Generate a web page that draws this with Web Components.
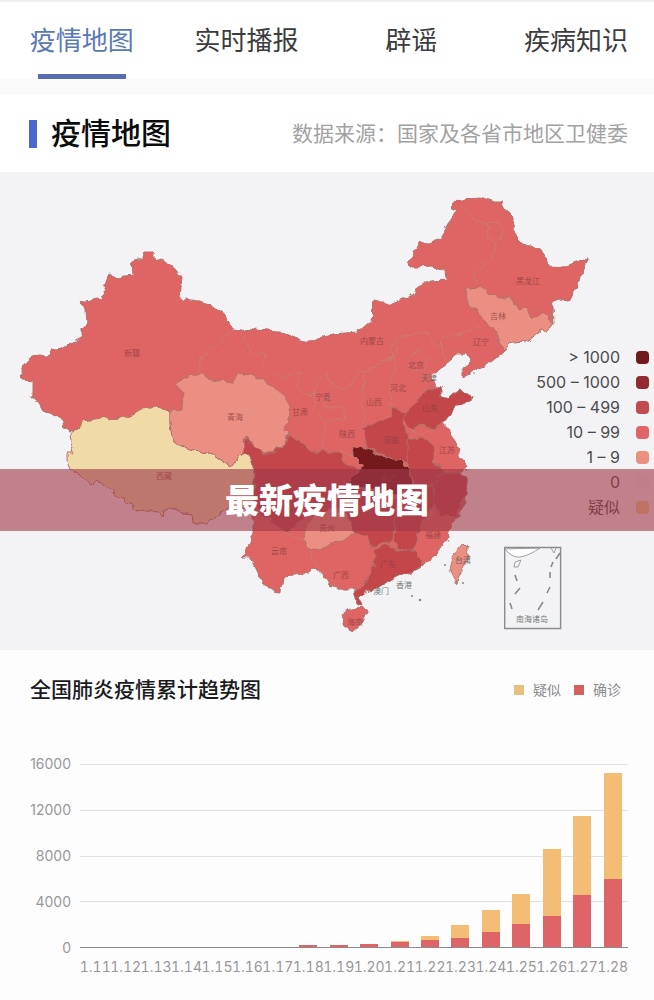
<!DOCTYPE html>
<html lang="zh-CN">
<head>
<meta charset="utf-8">
<meta name="viewport" content="width=device-width, initial-scale=1">
<title>最新疫情地图</title>
<style>
body { margin: 0; background: #fafafa; font-family: "Liberation Sans", "Noto Sans CJK SC", sans-serif; color: #333; }
</style>
</head>
<body>
<epidemic-page></epidemic-page>
<script>
const define = (name, html, setup) => customElements.define(name, class extends HTMLElement {
  connectedCallback() {
    if (this.shadowRoot) return;
    const root = this.attachShadow({ mode: 'open' });
    const t = document.createElement('template');
    t.innerHTML = html;
    root.append(t.content.cloneNode(true));
    if (setup) setup(root, this);
  }
});

define('tab-bar', `
<style>
:host { display: block; background: #fff; border-top: 2px solid #f0f0f0; }
nav { display: grid; grid-template-columns: repeat(4, 1fr); column-gap: 9px; padding-left: 4px; }
</style>
<nav><slot></slot></nav>`);

define('tab-item', `
<style>
:host { display: flex; justify-content: center; }
a { display: flex; flex-direction: column; align-items: center; color: #3c3c3e; text-decoration: none; font-size: 26px; line-height: 36px; padding-top: 21px; white-space: nowrap; }
a::after { content: ""; width: 88px; height: 5px; margin-top: 15px; }
:host([active]) a { color: #5a78b6; }
:host([active]) a::after { background: #566bb0; }
</style>
<a href="#"><slot></slot></a>`, (root, host) => {
  if (host.hasAttribute('active')) root.querySelector('a').setAttribute('aria-current', 'page');
});

define('map-heading', `
<style>
:host { display: flex; align-items: center; justify-content: space-between; margin-top: 16px; padding: 0 26px 0 29px; height: 77px; background: #fff; }
h1 { display: flex; align-items: center; gap: 14px; margin: 0; font-size: 30px; line-height: 40px; font-weight: 500; color: #0c0c0c; white-space: nowrap; }
h1::before { content: ""; width: 8px; height: 28px; background: #4c68cf; }
p { margin: 0; font-size: 21px; line-height: 30px; color: #a2a2a2; white-space: nowrap; }
</style>
<h1><slot></slot></h1><p><slot name="source"></slot></p>`);

define('map-legend', `
<style>
:host { display: block; font-family: Inter, "Noto Sans CJK SC", sans-serif; font-size: 16px; line-height: 25px; color: #4b4b4d; }
ul { list-style: none; margin: 0; padding: 0; }
li { display: flex; align-items: center; justify-content: flex-end; gap: 16px; white-space: nowrap; }
i { width: 13px; height: 13px; border-radius: 4px; }
</style>
<ul></ul>`, root => {
  const rows = [['> 1000', '#701a20'], ['500 – 1000', '#932a32'], ['100 – 499', '#c24a4f'], ['10 – 99', '#df6467'], ['1 – 9', '#ea917f'], ['0', '#f4ecea'], ['疑似', '#eecf8c']];
  root.querySelector('ul').innerHTML = rows.map(([t, c]) => `<li><span>${t}</span><i style="background:${c}"></i></li>`).join('');
});

define('china-map', `
<style>
:host { display: block; }
svg { display: block; width: 100%; height: auto; }
.land path { stroke: #b0736c; stroke-width: 1; stroke-linejoin: round; }
.m { fill: #df6464; } .d { fill: #c2464a; } .l { fill: #ea8f82; } .x { fill: #75191d; } .y { fill: #f0daa7; }
.land .line { fill: none; stroke: #c87d76; }
text { font: 8px "Noto Sans CJK SC", sans-serif; text-anchor: middle; fill: #8d3f42; fill-opacity: .8; }
.dark text { fill: #4e5653; }
.inset { fill: none; stroke: #8b8b8e; }
</style>
<svg viewBox="0 172 654 478" role="img" aria-label="全国疫情分布">
<defs><filter id="coast" x="0" y="172" width="654" height="478" filterUnits="userSpaceOnUse" color-interpolation-filters="sRGB">
<feTurbulence type="fractalNoise" baseFrequency=".15" numOctaves="1" seed="4" result="n"/>
<feDisplacementMap in="SourceGraphic" in2="n" scale="8" xChannelSelector="R" yChannelSelector="G"/><feGaussianBlur stdDeviation=".4"/></filter></defs>
<g class="land" filter="url(#coast)">
<path class="m" d="M22 372L25 363 33 357 40 356 48 357 52 351 62 349 72 343 83 337 83 328 87 323 86 310 81 302 97 298 104 299 102 293 109 274 117 278 133 276 132 262 142 259 144 251 153 251 155 257 167 264 173 266 182 278 180 297 183 299 200 301 213 307 222 312 232 328 240 329 280 332 300 340 310 342 333 334 357 332 365 325 374 317 371 310 373 301 383 303 392 303 413 295 418 287 430 281 448 280 443 270 430 266 420 267 410 267 409 262 419 242 427 244 443 238 443 232 452 217 457 211 450 207 455 202 467 198 480 197 495 202 502 202 508 213 513 218 517 240 522 245 537 247 545 254 550 267 563 268 577 262 588 259 583 268 580 280 572 295 569 301 560 299 553 303 552 308 553 323 550 327 547 332 542 330 533 337 525 342 512 343 504 351 490 363 477 368 462 377 462 372 470 362 466 353 458 353 452 358 440 368 432 375 433 383 440 388 442 397 448 397 458 390 473 397 470 402 458 405 443 423 447 428 455 440 460 457 468 467 460 473 468 480 467 493 462 508 452 523 447 540 435 555 423 565 413 572 397 577 380 587 363 593 358 598 362 605 356 603 354 593 358 590 345 590 330 585 325 575 313 568 303 575 283 577 280 593 275 592 263 583 257 573 250 558 243 558 247 548 253 533 253 508 230 507 180 440 78 430 70 431 65 428 63 418 45 412 35 397 30 398 33 393 33 381 23 380Z"/>
<path class="y" d="M72 432L78 430 83 421 107 417 113 420 133 415 142 409 157 407 170 410 170 423 172 438 182 447 213 454 225 463 232 466 242 453 250 457 254 470 254 500 252 508 230 507 220 513 208 523 193 523 192 515 170 508 165 510 164 518 160 512 138 510 120 497 107 488 97 480 92 485 80 475 70 470 67 460 67 453 73 453 69 437Z"/>
<path class="l" d="M170 410L182 411 183 393 175 382 200 374 213 380 233 383 238 373 255 376 278 390 292 407 289 417 283 427 288 433 285 445 272 453 263 453 250 443 247 435 242 453 232 466 225 463 213 454 182 447 172 438 170 423Z"/>
<path class="d" d="M247 435L250 443 263 453 272 453 285 445 288 435 300 440 312 452 322 452 340 452 343 461 357 468 358 482 350 490 346 505 330 509 310 516 298 522 290 532 280 530 268 518 260 514 254 500 254 470 250 457 242 453Z"/>
<path class="d" d="M363 428L390 417 392 408 407 413 402 423 408 437 413 447 408 463 400 463 367 448Z"/>
<path class="d" d="M410 408L420 397 430 387 440 388 442 397 448 397 458 390 473 397 470 402 458 405 443 423 435 428 420 425 413 430 402 420Z"/>
<path class="d" d="M408 440L423 437 435 447 433 463 442 467 443 473 433 485 417 487 408 470Z"/>
<path class="d" d="M443 473L460 473 468 480 467 493 455 517 440 515 433 500 433 485Z"/>
<path class="d" d="M350 488L390 495 397 500 393 540 382 542 373 548 368 537 353 533 347 514Z"/>
<path class="d" d="M397 497L412 487 433 485 434 505 422 522 417 543 412 552 397 548 394 540Z"/>
<path class="x" d="M353 447L367 448 380 457 400 460 410 470 412 487 392 496 370 488 346 490 350 480 363 465 353 455Z"/>
<path class="d" d="M375 550L387 543 397 550 412 551 420 557 423 565 413 572 397 577 380 587 363 593 358 598 362 605 356 603 354 593 363 587 373 565Z"/>
<path class="l" d="M305 530L312 517 330 509 347 514 354 533 343 541 332 544 320 550 308 548 304 540Z"/>
<path class="l" d="M466 290L483 286 488 294 505 298 513 300 518 310 527 308 532 318 540 314 548 316 553 323 550 327 547 332 542 330 533 337 525 342 512 343 504 351 495 330 480 318 477 308 470 308Z"/>
<path class="m" d="M347 610L363 607 367 612 363 622 353 631 345 627 343 618Z"/>
<path class="l" d="M463 543L467 547 467 560 458 578 457 585 454 578 449 568 452 557Z"/>
<path class="line" d="M240 329L252 355 265 353 263 365 282 378 300 372 297 387 308 395 315 393 315 410 325 422 323 440 323 450M200 374L200 358 220 342 232 329M315 393L320 377 327 372 333 387 347 390 357 372 365 371 393 358 392 342 397 338 420 333 430 333 433 345 443 347M330 392L323 407 345 407 345 418 325 422M365 372L362 400 363 428M393 358L398 365 390 380 392 408M380 360L397 357 397 342M408 357L418 350 427 357 425 368 412 372 408 363M425 365L433 375M483 325L450 337 443 333 442 352 447 362M462 205L477 223 498 222 505 230 497 243 490 260 472 277 480 285M487 223L488 238 497 243M308 548L312 558 318 568M283 532L304 540M435 428L420 435 413 430 410 440M423 525L434 510M340 452L353 455"/>
<path class="line" d="M464 468L468 472M466 484L468 490M448 542L449 540"/>
</g>
<g fill="#858a89"><circle cx="445" cy="565" r="1"/><circle cx="412" cy="596" r="1"/><circle cx="420" cy="600" r="1.3"/><circle cx="463" cy="583" r="1"/><circle cx="474" cy="373" r=".8"/></g>
<g>
<text x="132" y="356">新疆</text><text x="235" y="420">青海</text><text x="164" y="479">西藏</text><text x="300" y="415">甘肃</text><text x="323" y="400">宁夏</text><text x="372" y="344">内蒙古</text><text x="374" y="405">山西</text><text x="398" y="391">河北</text><text x="416" y="368">北京</text><text x="347" y="437">陕西</text><text x="391" y="443">河南</text><text x="430" y="411">山东</text><text x="447" y="453">江苏</text><text x="528" y="284">黑龙江</text><text x="498" y="319">吉林</text><text x="481" y="345">辽宁</text><text x="388" y="481">湖北</text><text x="327" y="531">贵州</text><text x="279" y="554">云南</text><text x="341" y="578">广西</text><text x="388" y="567">广东</text><text x="433" y="538">福建</text><text x="355" y="625">海南</text>
</g>
<g class="dark"><text x="429" y="381">天津</text><text x="463" y="563">台湾</text><text x="381" y="594">澳门</text><text x="404" y="588">香港</text><text x="532" y="622">南海诸岛</text></g>
<g class="inset"><path fill="#fff" stroke-width=".8" d="M505 549Q512 558 520 557T540 548Z"/><path stroke-width="1.4" d="M504.700 547.500H560.600V628.500H504.700Z"/><path stroke-width=".8" d="M551 548L554 553 556 548M515 562L521 560 518 567 514 567Z"/><path stroke-width="1.6" d="M560 553L556 559M553 562L551 567M550 572V578M550 587L547 593M515 575L517 581M520 588L515 594M510 603L512 609M543 602L538 610"/></g>
</svg>`);

define('map-panel', `
<style>
:host { display: grid; position: relative; background: #f3f3f5; }
china-map, map-legend { grid-area: 1 / 1; }
map-legend { justify-self: end; align-self: start; padding: 173px 5px 0 0; }
h2 { position: absolute; inset: 297px 0 auto 0; margin: 0; height: 62px; line-height: 64px; text-align: center; font-size: 34px; font-weight: 900; color: #fff; background: rgba(159, 58, 72, .62); }
</style>
<china-map></china-map><map-legend></map-legend><h2><slot></slot></h2>`);

define('trend-chart', `
<style>
:host { display: block; padding: 24px 26px 24px 30px; background: #fdfdfd; }
header { display: flex; align-items: center; justify-content: space-between; }
h2 { margin: 0; font-size: 21px; line-height: 32px; font-weight: 500; color: #1b1b1d; white-space: nowrap; }
.key { display: flex; gap: 13px; padding-right: 7px; font-size: 14px; line-height: 20px; color: #8b8b8d; }
.key span { display: flex; align-items: center; gap: 9px; }
.key span::before { content: ""; width: 10px; height: 10px; background: var(--c); }
.chart { display: grid; grid-template-columns: 41px minmax(0, 1fr); column-gap: 9px; row-gap: 10px; margin-top: 58px; font: 14px/18px Inter, sans-serif; color: #98989b; }
.y { display: flex; flex-direction: column; justify-content: space-between; margin: -9px 0; }
.y span { display: flex; justify-content: flex-end; }
.plot { display: grid; height: 184px; }
.lines, .bars { grid-area: 1 / 1; display: flex; }
.lines { flex-direction: column; justify-content: space-between; }
.lines i { height: 1px; background: #e0dfe1; }
.lines i:last-child { background: #8f8889; }
.bars { align-items: stretch; padding-bottom: 1px; }
.bars div { flex: 1; display: flex; flex-direction: column; justify-content: flex-end; align-items: center; }
.bars i { width: 18px; flex: none; }
.s { background: #f4bd76; } .c { background: #df6467; }
.x { grid-column: 2; display: flex; font-variant-numeric: tabular-nums; }
.x span { flex: 1 1 0; min-width: 0; display: flex; justify-content: center; white-space: nowrap; }
</style>
<header><h2><slot></slot></h2><div class="key"><span style="--c:#e9bf7c">疑似</span><span style="--c:#d4605f">确诊</span></div></header>
<div class="chart"><div class="y"></div><div class="plot"><div class="lines"><i></i><i></i><i></i><i></i><i></i></div><div class="bars"></div></div><div class="x"></div></div>`, root => {
  const max = 16000;
  // [confirmed, suspected] per day, 1.11 to 1.28
  const days = [[0, 0], [0, 0], [0, 0], [0, 0], [0, 0], [0, 0], [0, 0], [150, 0], [198, 0], [291, 0], [440, 90], [571, 350], [830, 1072], [1287, 1965], [1975, 2684], [2744, 5794], [4515, 6973], [5974, 9239]];
  const pct = v => v / max * 100 + '%';
  root.querySelector('.y').innerHTML = [16000, 12000, 8000, 4000, 0].map(v => `<span>${v}</span>`).join('');
  root.querySelector('.bars').innerHTML = days.map(([c, s]) => `<div><i class="s" style="height:${pct(s)}"></i><i class="c" style="height:${pct(c)}"></i></div>`).join('');
  root.querySelector('.x').innerHTML = days.map((_, i) => `<span>1.${11 + i}</span>`).join('');
});

define('epidemic-page', `
<style>:host { display: block; }</style>
<tab-bar><tab-item active>疫情地图</tab-item><tab-item>实时播报</tab-item><tab-item>辟谣</tab-item><tab-item>疾病知识</tab-item></tab-bar>
<main>
<map-heading>疫情地图<span slot="source">数据来源：国家及各省市地区卫健委</span></map-heading>
<map-panel>最新疫情地图</map-panel>
<trend-chart>全国肺炎疫情累计趋势图</trend-chart>
</main>`);
</script>
</body>
</html>
